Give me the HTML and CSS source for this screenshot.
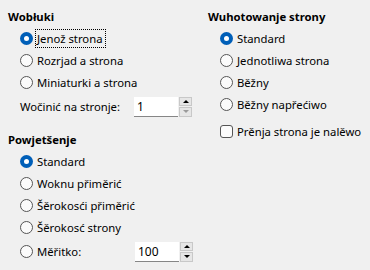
FILE: index.html
```html
<!DOCTYPE html>
<html lang="hsb">
<head>
    <meta charset="UTF-8">
    <title>Napohlad</title>
    <link rel="stylesheet" href="styles.css">
</head>
<body>

<div class="dialog">
    <div class="column">
        <!-- Wobłuki -->
        <div class="group">
            <div class="heading">Wobłuki</div>
            <div class="option"><span class="radio checked"></span><span class="text focus">Jenož strona</span></div>
            <div class="option"><span class="radio"></span><span class="text">Rozrjad a strona</span></div>
            <div class="option"><span class="radio"></span><span class="text">Miniaturki a strona</span></div>
            <div class="field-row">
                <span class="field-label wide">Wočinić na stronje:</span>
                <div class="spin">
                    <div class="spin-value">1</div>
                    <div class="spin-buttons">
                        <div class="spin-btn"><span class="arrow up"></span></div>
                        <div class="spin-btn"><span class="arrow down disabled"></span></div>
                    </div>
                </div>
            </div>
        </div>

        <!-- Powjetšenje -->
        <div class="group zoom">
            <div class="heading">Powjetšenje</div>
            <div class="option"><span class="radio checked"></span><span class="text">Standard</span></div>
            <div class="option"><span class="radio"></span><span class="text">Woknu přiměrić</span></div>
            <div class="option"><span class="radio"></span><span class="text">Šěrokosći přiměrić</span></div>
            <div class="option"><span class="radio"></span><span class="text">Šěrokosć strony</span></div>
            <div class="field-row">
                <span class="radio"></span>
                <span class="field-label">Měřitko:</span>
                <div class="spin">
                    <div class="spin-value">100</div>
                    <div class="spin-buttons">
                        <div class="spin-btn"><span class="arrow up"></span></div>
                        <div class="spin-btn"><span class="arrow down"></span></div>
                    </div>
                </div>
            </div>
        </div>
    </div>

    <div class="column">
        <!-- Wuhotowanje strony -->
        <div class="group">
            <div class="heading">Wuhotowanje strony</div>
            <div class="option"><span class="radio checked"></span><span class="text">Standard</span></div>
            <div class="option"><span class="radio"></span><span class="text">Jednotliwa strona</span></div>
            <div class="option"><span class="radio"></span><span class="text">Běžny</span></div>
            <div class="option"><span class="radio"></span><span class="text">Běžny napřećiwo</span></div>
            <div class="option check-row"><span class="checkbox"></span><span class="text">Prěnja strona je nalěwo</span></div>
        </div>
    </div>
</div>

</body>
</html>
```

FILE: styles.css
```css
* {
    box-sizing: border-box;
}

body {
    margin: 0;
    background-color: #f0f0f0;
    font-family: "Noto Sans", "Open Sans", sans-serif;
    font-size: 11.3px;
    color: #000;
}

.dialog {
    display: grid;
    grid-template-columns: 200px 170px;
    padding: 9px 0 0 8px;
}

.column {
    display: flex;
    flex-direction: column;
}

.group {
    display: flex;
    flex-direction: column;
}

.group.zoom {
    margin-top: 13px;
}

.heading {
    font-weight: bold;
    height: 16px;
    line-height: 16px;
    margin-bottom: 2px;
}

.option {
    display: flex;
    align-items: center;
    height: 22px;
    padding-left: 12px;
}

.check-row {
    margin-top: 5px;
}

.text {
    margin-left: 4px;
    line-height: 15px;
}

.text.focus {
    outline: 1px dotted #000;
    outline-offset: 1px;
    padding: 0 1px 0 0;
}

/* radio buttons */
.radio {
    width: 13px;
    height: 13px;
    border-radius: 50%;
    border: 1px solid #555;
    background-color: #fbfbfb;
    flex-shrink: 0;
    display: flex;
    justify-content: center;
    align-items: center;
}

.radio.checked {
    border: none;
    background-color: #005fb8;
}

.radio.checked::after {
    content: "";
    width: 5px;
    height: 5px;
    border-radius: 50%;
    background-color: #fff;
}

.checkbox {
    width: 13px;
    height: 13px;
    border-radius: 3px;
    border: 1px solid #555;
    background-color: #fbfbfb;
    flex-shrink: 0;
}

/* number fields */
.field-row {
    display: flex;
    align-items: center;
    height: 26px;
    padding-left: 12px;
}

.field-label {
    width: 98px;
    margin-left: 4px;
}

.field-label.wide {
    width: 114px;
    margin-left: 0;
}

.spin {
    display: flex;
    height: 20px;
    margin-top: 1px;
}

.spin-value {
    width: 44px;
    background-color: #fff;
    border-bottom: 1px solid #868686;
    padding-left: 3px;
    line-height: 19px;
    font-size: 12px;
}

.spin-buttons {
    display: flex;
    flex-direction: column;
    width: 13px;
    margin-left: 1px;
    gap: 1px;
}

.spin-btn {
    flex: 1;
    background-color: #e6e6e6;
    border: 1px solid #c8c8c8;
    display: flex;
    justify-content: center;
    align-items: center;
}

.arrow {
    width: 0;
    height: 0;
    border-left: 3px solid transparent;
    border-right: 3px solid transparent;
}

.arrow.up {
    border-bottom: 3px solid #000;
}

.arrow.down {
    border-top: 3px solid #000;
}

.arrow.down.disabled {
    border-top-color: #9a9a9a;
}
```
